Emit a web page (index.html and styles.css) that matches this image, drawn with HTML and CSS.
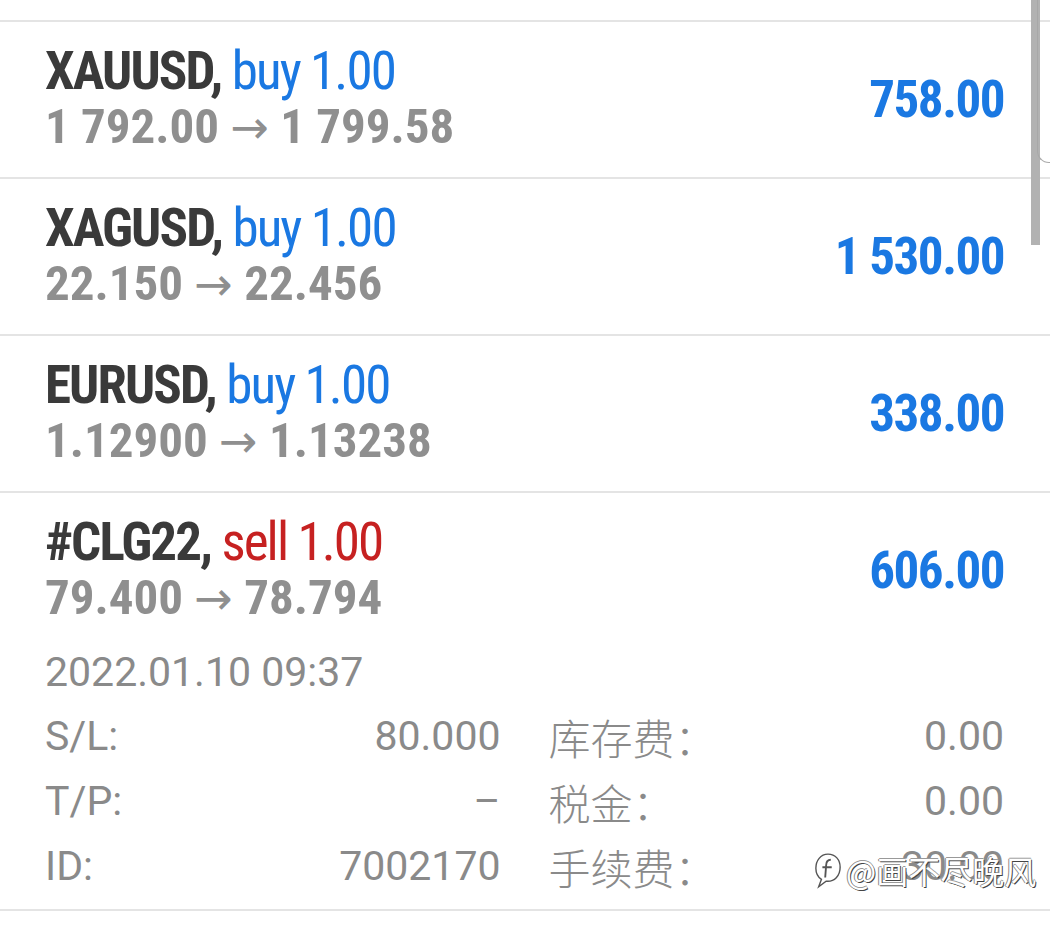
FILE: index.html
```html
<!DOCTYPE html>
<html lang="zh">
<head>
  <meta charset="UTF-8" />
  <meta name="viewport" content="width=device-width, initial-scale=1.0" />
  <title>Trade</title>
  <link rel="stylesheet" href="styles.css">
</head>
<body>
  <div class="list">
    <div class="trade">
      <div class="trade-head">
        <div class="trade-info">
          <div class="trade-title"><span class="symbol">XAUUSD,</span> <span class="buy">buy 1.00</span></div>
          <div class="trade-prices">1 792.00 <span class="arrow">→</span> 1 799.58</div>
        </div>
        <div class="trade-profit">758.00</div>
      </div>
    </div>

    <div class="trade">
      <div class="trade-head">
        <div class="trade-info">
          <div class="trade-title"><span class="symbol">XAGUSD,</span> <span class="buy">buy 1.00</span></div>
          <div class="trade-prices">22.150 <span class="arrow">→</span> 22.456</div>
        </div>
        <div class="trade-profit">1 530.00</div>
      </div>
    </div>

    <div class="trade">
      <div class="trade-head">
        <div class="trade-info">
          <div class="trade-title"><span class="symbol">EURUSD,</span> <span class="buy">buy 1.00</span></div>
          <div class="trade-prices">1.12900 <span class="arrow">→</span> 1.13238</div>
        </div>
        <div class="trade-profit">338.00</div>
      </div>
    </div>

    <div class="trade">
      <div class="trade-head">
        <div class="trade-info">
          <div class="trade-title"><span class="symbol">#CLG22,</span> <span class="sell">sell 1.00</span></div>
          <div class="trade-prices">79.400 <span class="arrow">→</span> 78.794</div>
        </div>
        <div class="trade-profit">606.00</div>
      </div>
      <div class="trade-details">
        <div class="trade-date">2022.01.10 09:37</div>
        <div class="detail-grid">
          <div class="detail"><span>S/L:</span><span>80.000</span></div>
          <div class="detail"><span class="cjk">库存费：</span><span>0.00</span></div>
          <div class="detail"><span>T/P:</span><span>–</span></div>
          <div class="detail"><span class="cjk">税金：</span><span>0.00</span></div>
          <div class="detail"><span>ID:</span><span>7002170</span></div>
          <div class="detail"><span class="cjk">手续费：</span><span>-30.00</span></div>
        </div>
      </div>
    </div>
  </div>

  <div class="scrollbar"></div>
  <div class="edge"></div>

  <div class="watermark">
    <svg class="wm-logo" width="28" height="38" viewBox="0 0 30 40">
      <path d="M15 3 C7 3 2 10 2 18 C2 24 5 28 8 30 L5 38 L13 32 C22 33 28 26 28 17 C28 9 23 3 15 3 Z" fill="#fff" stroke="#555" stroke-width="1.5"/>
      <path d="M18 9 C14 9 13 12 13 15 L12 28 M9 17 L19 17" fill="none" stroke="#555" stroke-width="2"/>
    </svg>
    <span>@画不尽晚风</span>
  </div>
</body>
</html>
```

FILE: styles.css
```css
body {
  margin: 0;
  background: #fff;
  font-family: Roboto, "Noto Sans CJK SC", sans-serif;
  overflow: hidden;
}
.list {
  padding-top: 20px;
}
.trade {
  border-top: 2px solid #e4e4e4;
}
.trade:last-child {
  border-bottom: 2px solid #e4e4e4;
}
.trade-head {
  height: 155px;
  display: flex;
  align-items: center;
  justify-content: space-between;
  padding: 0 46px 0 45px;
}
.trade-title,
.trade-prices,
.trade-profit {
  font-family: Roboto, sans-serif;
  font-stretch: 75%;
  white-space: nowrap;
}
.trade-title {
  font-size: 53px;
  line-height: 55px;
  letter-spacing: -1.9px;
}
.symbol {
  font-weight: 700;
  color: #3a3a3a;
}
.buy {
  color: #1a78e2;
}
.sell {
  color: #c62121;
}
.trade-prices {
  font-weight: 700;
  font-size: 49px;
  line-height: 55px;
  color: #8f8f8f;
}
.arrow {
  font-family: "DejaVu Sans", sans-serif;
  font-weight: 400;
  font-stretch: 100%;
  font-size: 46px;
}
.trade-profit {
  font-weight: 700;
  font-size: 51px;
  letter-spacing: -1.5px;
  color: #1a78e2;
}
.trade-details {
  padding: 0 46px 10px 45px;
  color: #8a8a8a;
  font-size: 41px;
}
.trade-date {
  line-height: 48px;
  margin-bottom: 8px;
}
.detail-grid {
  display: grid;
  grid-template-columns: 1fr 1fr;
  column-gap: 48px;
}
.detail {
  display: flex;
  justify-content: space-between;
  line-height: 65px;
}
.cjk {
  font-family: "Noto Sans CJK SC", sans-serif;
  font-weight: 300;
  font-size: 42px;
}
.scrollbar {
  position: absolute;
  left: 1031px;
  top: 0;
  width: 9px;
  height: 245px;
  background: #b2b2b2;
}
.edge {
  position: absolute;
  left: 1037px;
  top: -20px;
  width: 30px;
  height: 182px;
  border-left: 1px solid #a8a8a8;
  border-bottom: 1px solid #a8a8a8;
  border-bottom-left-radius: 12px;
}
.watermark {
  position: absolute;
  left: 814px;
  top: 847px;
  display: flex;
  align-items: center;
  gap: 4px;
  font-family: "Noto Sans CJK SC", sans-serif;
  font-size: 32px;
  color: #fff;
  text-shadow: 1px 1px 0 #444, -1px 0 0 #888, 0 -1px 0 #999;
  white-space: nowrap;
}
```
